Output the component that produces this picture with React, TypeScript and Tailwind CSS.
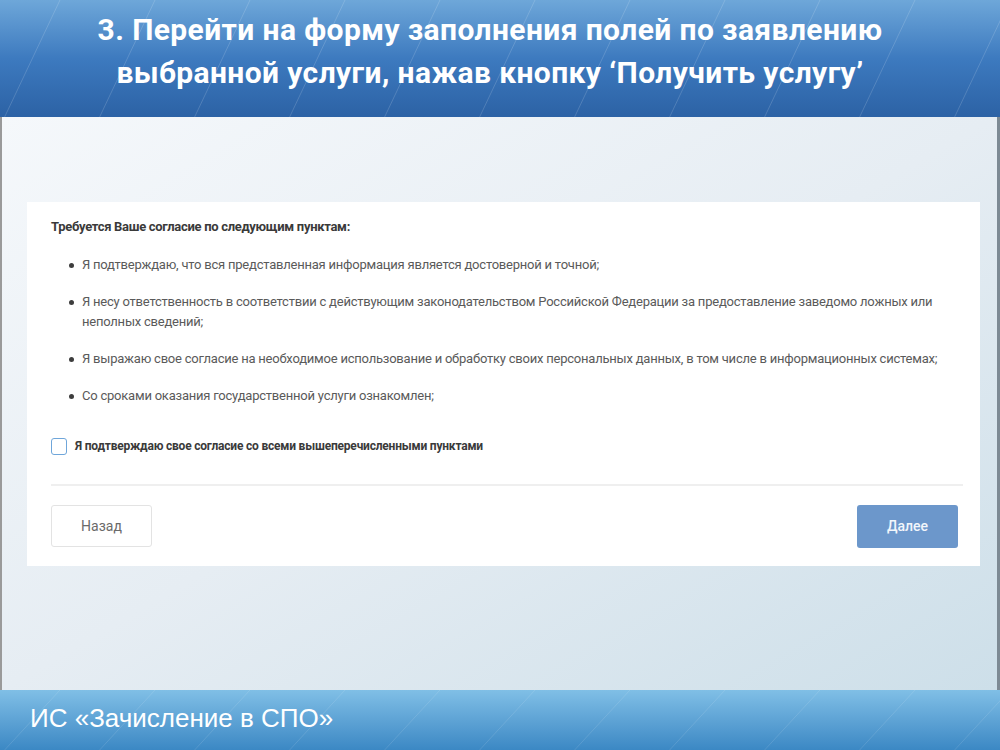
import React from "react";

function Stripes() {
  const lines = [];
  for (let i = -2; i < 14; i++) {
    const x = i * 95;
    lines.push(<line key={i} x1={x} y1={130} x2={x + 60} y2={0} stroke="rgba(255,255,255,0.16)" strokeWidth={1} />);
  }
  return (
    <svg className="absolute inset-0 w-full h-full pointer-events-none" viewBox="0 0 1000 120" preserveAspectRatio="none">
      {lines}
    </svg>
  );
}

export default function App() {
  const items: React.ReactNode[] = [
    "Я подтверждаю, что вся представленная информация является достоверной и точной;",
    <>
      Я несу ответственность в соответствии с действующим законодательством Российской Федерации за предоставление заведомо ложных или
      <br />
      неполных сведений;
    </>,
    "Я выражаю свое согласие на необходимое использование и обработку своих персональных данных, в том числе в информационных системах;",
    "Со сроками оказания государственной услуги ознакомлен;",
  ];
  return (
    <div className="w-[1000px] h-[750px] flex flex-col overflow-hidden">
      <header className="relative h-[117px] shrink-0 bg-gradient-to-b from-[#6ea7d9] via-[#3d7abf] to-[#2c62a5] flex flex-col items-center pt-[8px] pr-[20px]">
        <Stripes />
        <h1
          className="relative text-white font-bold text-[30px] leading-[43px] text-center tracking-[0.4px]"
          style={{ fontFamily: "Roboto, 'Noto Sans', sans-serif" }}
        >
          3. Перейти на форму заполнения полей по заявлению
          <br />
          выбранной услуги, нажав кнопку ‘Получить услугу’
        </h1>
      </header>

      <main
        className="flex-1 border-l-2 border-l-[#9a9a9a] border-r-[3px] border-r-[#7d8a94] bg-gradient-to-br from-[#f5f8fb] via-[#e6edf3] to-[#cddfe9] pt-[85px] pl-[25px] pr-[15px]"
        style={{ fontFamily: "Roboto, 'Noto Sans', sans-serif" }}
      >
        <div className="bg-white w-[953px] pt-[16px] pl-[24px] pr-[17px] pb-[18px]">
          <p className="text-[13px] leading-[18px] font-bold text-[#3a3a3a] tracking-[-0.3px]">
            Требуется Ваше согласие по следующим пунктам:
          </p>
          <ul className="mt-[19px] flex flex-col gap-[17px] pl-[18px]">
            {items.map((t, i) => (
              <li key={i} className="flex items-start text-[13px] leading-[20px] text-[#5a5a5a] tracking-[-0.22px]">
                <span className="w-[5px] h-[5px] rounded-full bg-[#3d3d3d] mt-[8px] mr-[8px] shrink-0" />
                <span>{t}</span>
              </li>
            ))}
          </ul>
          <label className="mt-[31px] flex items-center h-[18px]">
            <span className="w-[16px] h-[17px] border-[1.5px] border-[#6fa6da] rounded-[3px] bg-white shrink-0" />
            <span className="ml-[8px] text-[12px] font-bold text-[#3a3a3a] tracking-[-0.2px]">
              Я подтверждаю свое согласие со всеми вышеперечисленными пунктами
            </span>
          </label>
          <div className="mt-[29px] h-[2px] bg-[#efefef]" />
          <div className="mt-[19px] flex justify-between pr-[5px]">
            <button className="w-[101px] h-[42px] border border-[#e3e3e3] rounded-[3px] bg-white text-[14px] text-[#6a6a6a]">
              Назад
            </button>
            <button className="w-[101px] h-[43px] rounded-[3px] bg-[#6c97cb] text-[14px] font-medium text-[#f2f6fb]">
              Далее
            </button>
          </div>
        </div>
      </main>

      <footer className="relative h-[60px] shrink-0 bg-gradient-to-b from-[#80bfe6] to-[#3b88c4] flex items-center pl-[30px] pb-[3px]">
        <Stripes />
        <span
          className="relative text-white text-[26px]"
          style={{ fontFamily: "'Liberation Sans', Arial, sans-serif" }}
        >
          ИС «Зачисление в СПО»
        </span>
      </footer>
    </div>
  );
}
